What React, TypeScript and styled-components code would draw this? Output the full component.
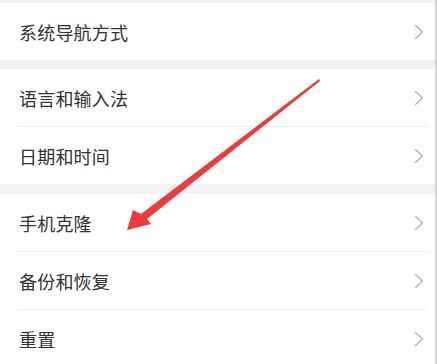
import styled, { createGlobalStyle } from "styled-components";

const GlobalStyle = createGlobalStyle`
  html, body {
    margin: 0;
    padding: 0;
    background: #ffffff;
  }
  body {
    font-family: "Noto Sans CJK SC", "Noto Sans", sans-serif;
  }
`;

const Page = styled.div`
  position: relative;
  width: 435px;
  height: 364px;
  overflow: hidden;
  background: #f2f2f2;
  border-right: 2px solid #d4d4d4;
  padding-top: 3px;
`;

const Group = styled.div<{ $gap?: number }>`
  background: #ffffff;
  margin-bottom: ${({ $gap }) => $gap ?? 0}px;
`;

const Row = styled.div<{ $divider?: boolean }>`
  display: flex;
  align-items: center;
  justify-content: space-between;
  height: 57px;
  padding: 0 11px 0 19px;
  position: relative;
  box-sizing: border-box;

  ${({ $divider }) =>
    $divider &&
    `
    &::after {
      content: "";
      position: absolute;
      left: 18px;
      right: 8px;
      bottom: -1px;
      height: 1px;
      background: #ececec;
    }
    margin-bottom: 1px;
  `}
`;

const Label = styled.span`
  font-size: 18px;
  color: #333333;
  letter-spacing: 0.2px;
`;

const Chevron = () => (
  <svg width="10" height="16" viewBox="0 0 10 16" fill="none">
    <path
      d="M1.5 1.5 L8.5 8 L1.5 14.5"
      stroke="#b4b4b4"
      strokeWidth="1.4"
      strokeLinecap="round"
      strokeLinejoin="round"
    />
  </svg>
);

const ArrowLayer = styled.svg`
  position: absolute;
  left: 0;
  top: 0;
  pointer-events: none;
`;

type Item = { label: string };

const groups: { items: Item[]; gap: number }[] = [
  { items: [{ label: "系统导航方式" }], gap: 9 },
  { items: [{ label: "语言和输入法" }, { label: "日期和时间" }], gap: 10 },
  {
    items: [{ label: "手机克隆" }, { label: "备份和恢复" }, { label: "重置" }],
    gap: 0,
  },
];

export default function App() {
  return (
    <>
      <GlobalStyle />
      <Page>
        {groups.map((g, gi) => (
          <Group key={gi} $gap={g.gap}>
            {g.items.map((it, i) => (
              <Row key={it.label} $divider={i < g.items.length - 1}>
                <Label>{it.label}</Label>
                <Chevron />
              </Row>
            ))}
          </Group>
        ))}
        <ArrowLayer width="435" height="364" viewBox="0 0 435 364">
          <polygon
            points="319,79 320,81 147,219 151,224 127,230 133,210 141,214"
            fill="#f03a3a"
          />
        </ArrowLayer>
      </Page>
    </>
  );
}
